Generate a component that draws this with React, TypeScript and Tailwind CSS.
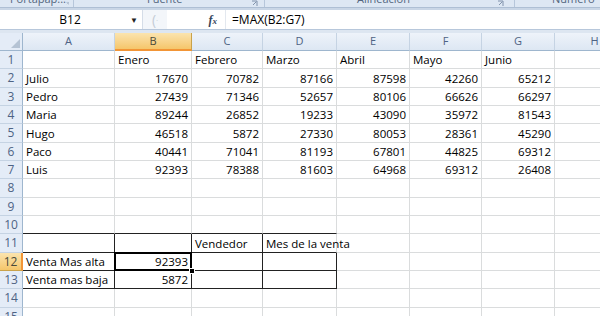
import React from "react";

const cols = ["A", "B", "C", "D", "E", "F", "G", "H"];
const widths = [92, 77, 71, 74, 73, 72, 73, 80];
const rowHeights = [18, 19, 18, 18, 19, 18, 18, 19, 18, 18, 19, 18, 18, 19, 18];

type Cell = { t: string; right?: boolean };

const data: Record<number, Cell[]> = {
  1: [{ t: "" }, { t: "Enero" }, { t: "Febrero" }, { t: "Marzo" }, { t: "Abril" }, { t: "Mayo" }, { t: "Junio" }],
  2: [{ t: "Julio" }, { t: "17670", right: true }, { t: "70782", right: true }, { t: "87166", right: true }, { t: "87598", right: true }, { t: "42260", right: true }, { t: "65212", right: true }],
  3: [{ t: "Pedro" }, { t: "27439", right: true }, { t: "71346", right: true }, { t: "52657", right: true }, { t: "80106", right: true }, { t: "66626", right: true }, { t: "66297", right: true }],
  4: [{ t: "Maria" }, { t: "89244", right: true }, { t: "26852", right: true }, { t: "19233", right: true }, { t: "43090", right: true }, { t: "35972", right: true }, { t: "81543", right: true }],
  5: [{ t: "Hugo" }, { t: "46518", right: true }, { t: "5872", right: true }, { t: "27330", right: true }, { t: "80053", right: true }, { t: "28361", right: true }, { t: "45290", right: true }],
  6: [{ t: "Paco" }, { t: "40441", right: true }, { t: "71041", right: true }, { t: "81193", right: true }, { t: "67801", right: true }, { t: "44825", right: true }, { t: "69312", right: true }],
  7: [{ t: "Luis" }, { t: "92393", right: true }, { t: "78388", right: true }, { t: "81603", right: true }, { t: "64968", right: true }, { t: "69312", right: true }, { t: "26408", right: true }],
  11: [{ t: "" }, { t: "" }, { t: "Vendedor" }, { t: "Mes de la venta" }],
  12: [{ t: "Venta Mas alta" }, { t: "92393", right: true }],
  13: [{ t: "Venta mas baja" }, { t: "5872", right: true }],
};

const font = { fontFamily: "'Open Sans', 'Liberation Sans', sans-serif" };

function Launcher() {
  return (
    <svg width="7" height="7" viewBox="0 0 7 7" className="text-[#6b7f99]">
      <path d="M1 1h5v5" fill="none" stroke="currentColor" strokeWidth="0.8" />
      <path d="M2 5l3-3" stroke="currentColor" strokeWidth="0.8" />
    </svg>
  );
}

export default function App() {
  return (
    <div className="w-[600px] h-[316px] overflow-hidden bg-white text-[11.5px] text-black" style={font}>
      {/* ribbon group labels */}
      <div className="flex h-[7px] overflow-hidden bg-[#dde7f3] text-[11px] text-[#53667e]">
        <div className="flex w-[74px] items-end justify-between border-r border-[#b6c6da] pl-[10px] pr-[4px]">
          <span className="-mt-[9px] leading-[16px] self-start">Portapap...</span>
          <Launcher />
        </div>
        <div className="flex w-[191px] items-end justify-between border-r border-[#b6c6da] pr-[6px]">
          <span className="-mt-[9px] ml-[73px] leading-[16px] self-start">Fuente</span>
          <Launcher />
        </div>
        <div className="flex w-[250px] items-end justify-between border-r border-[#b6c6da] pr-[10px]">
          <span className="-mt-[9px] ml-[92px] leading-[16px] self-start">Alineación</span>
          <Launcher />
        </div>
        <div className="flex flex-1">
          <span className="-mt-[9px] ml-[37px] leading-[16px]">Número</span>
        </div>
      </div>
      <div className="h-[3px] bg-[#c9d6e6] border-t border-[#aebfd4]" />

      {/* formula bar */}
      <div className="flex h-[19px] items-center bg-white">
        <div className="flex h-full w-[143px] items-center border-r border-[#d5dde8]">
          <span className="flex-1 pl-[10px] text-center text-[12px]">B12</span>
          <span className="pr-[4px] text-[8px] text-[#222]">▼</span>
        </div>
        <div className="flex h-full w-[24px] items-center justify-center bg-[#f3f6fa]">
          <span className="text-[14px] leading-none text-[#c4ccd6]">(</span>
          <span className="text-[8px] text-[#c4ccd6]">·</span>
        </div>
        <div className="flex h-full w-[58px] items-center justify-end pr-[8px]">
          <span className="text-[12px] italic font-bold text-[#35455c]" style={{ fontFamily: "'Liberation Serif', serif" }}>
            f<span className="text-[9px]">x</span>
          </span>
        </div>
        <div className="flex h-full flex-1 items-center border-l border-[#e3e8ef] pl-[6px] text-[12px]">=MAX(B2:G7)</div>
      </div>
      <div className="h-[4px] bg-[#dde6f1] border-t border-[#b7c7db]" />

      {/* column headers */}
      <div className="flex h-[18px]">
        <div className="relative w-[23px] shrink-0 border-r border-b border-[#9eb6ce] bg-[#e4ecf7]">
          <svg width="9" height="9" viewBox="0 0 9 9" className="absolute right-[2px] bottom-[2px]">
            <path d="M9 0V9H0Z" fill="#b5c3d4" />
          </svg>
        </div>
        {cols.map((c, i) => (
          <div
            key={c}
            style={{ width: widths[i] }}
            className={
              c === "B"
                ? "flex shrink-0 items-center justify-center border-r border-b-2 border-r-[#c9a24a] border-b-[#f29536] bg-gradient-to-b from-[#fbe4ae] to-[#f5c66a] text-[11px] text-[#4a4a3a]"
                : "flex shrink-0 items-center justify-center border-r border-b border-[#c5d3e3] border-b-[#9eb6ce] bg-gradient-to-b from-[#eef3fa] to-[#dde7f3] text-[11px] text-[#4e6384]"
            }
          >
            {c}
          </div>
        ))}
      </div>

      {/* rows */}
      {rowHeights.map((h, ri) => {
        const r = ri + 1;
        const cells = data[r] || [];
        const sel = r === 12;
        return (
          <div key={r} className="flex" style={{ height: h }}>
            <div
              className={
                sel
                  ? "flex w-[23px] shrink-0 items-center justify-center border-r-2 border-b border-r-[#f29536] border-b-[#c9a24a] bg-gradient-to-b from-[#fbe4ae] to-[#f5c66a] text-[12px] text-[#4a4a3a]"
                  : "flex w-[23px] shrink-0 items-center justify-center border-r border-b border-[#c5d3e3] border-r-[#9eb6ce] bg-[#e4ecf7] text-[12px] text-[#4e6384]"
              }
            >
              {r}
            </div>
            {cols.map((c, ci) => {
              const cell = cells[ci];
              const inTable = r >= 11 && r <= 13 && ci <= 3;
              const aboveTable = r === 10 && ci <= 3;
              const darkRight = inTable && !(r === 11 && ci === 3);
              const darkBottom = inTable || aboveTable;
              const isSel = r === 12 && c === "B";
              return (
                <div
                  key={c}
                  style={{ width: widths[ci] }}
                  className={`relative flex shrink-0 items-end overflow-visible whitespace-nowrap border-r border-b pb-[1px] leading-[15px] ${
                    darkRight ? "border-r-[#222]" : "border-r-[#dadcdd]"
                  } ${darkBottom ? "border-b-[#222]" : "border-b-[#dadcdd]"} ${
                    cell?.right ? "justify-end pr-[3px]" : "justify-start pl-[3px]"
                  }`}
                >
                  {cell?.t && <span className="relative z-10">{cell.t}</span>}
                  {isSel && (
                    <>
                      <div className="absolute -left-[1px] -top-[1px] -right-[1px] -bottom-[1px] border-2 border-black" />
                      <div className="absolute -right-[4px] -bottom-[4px] z-20 h-[6px] w-[6px] border border-white bg-black" />
                    </>
                  )}
                </div>
              );
            })}
          </div>
        );
      })}
    </div>
  );
}
